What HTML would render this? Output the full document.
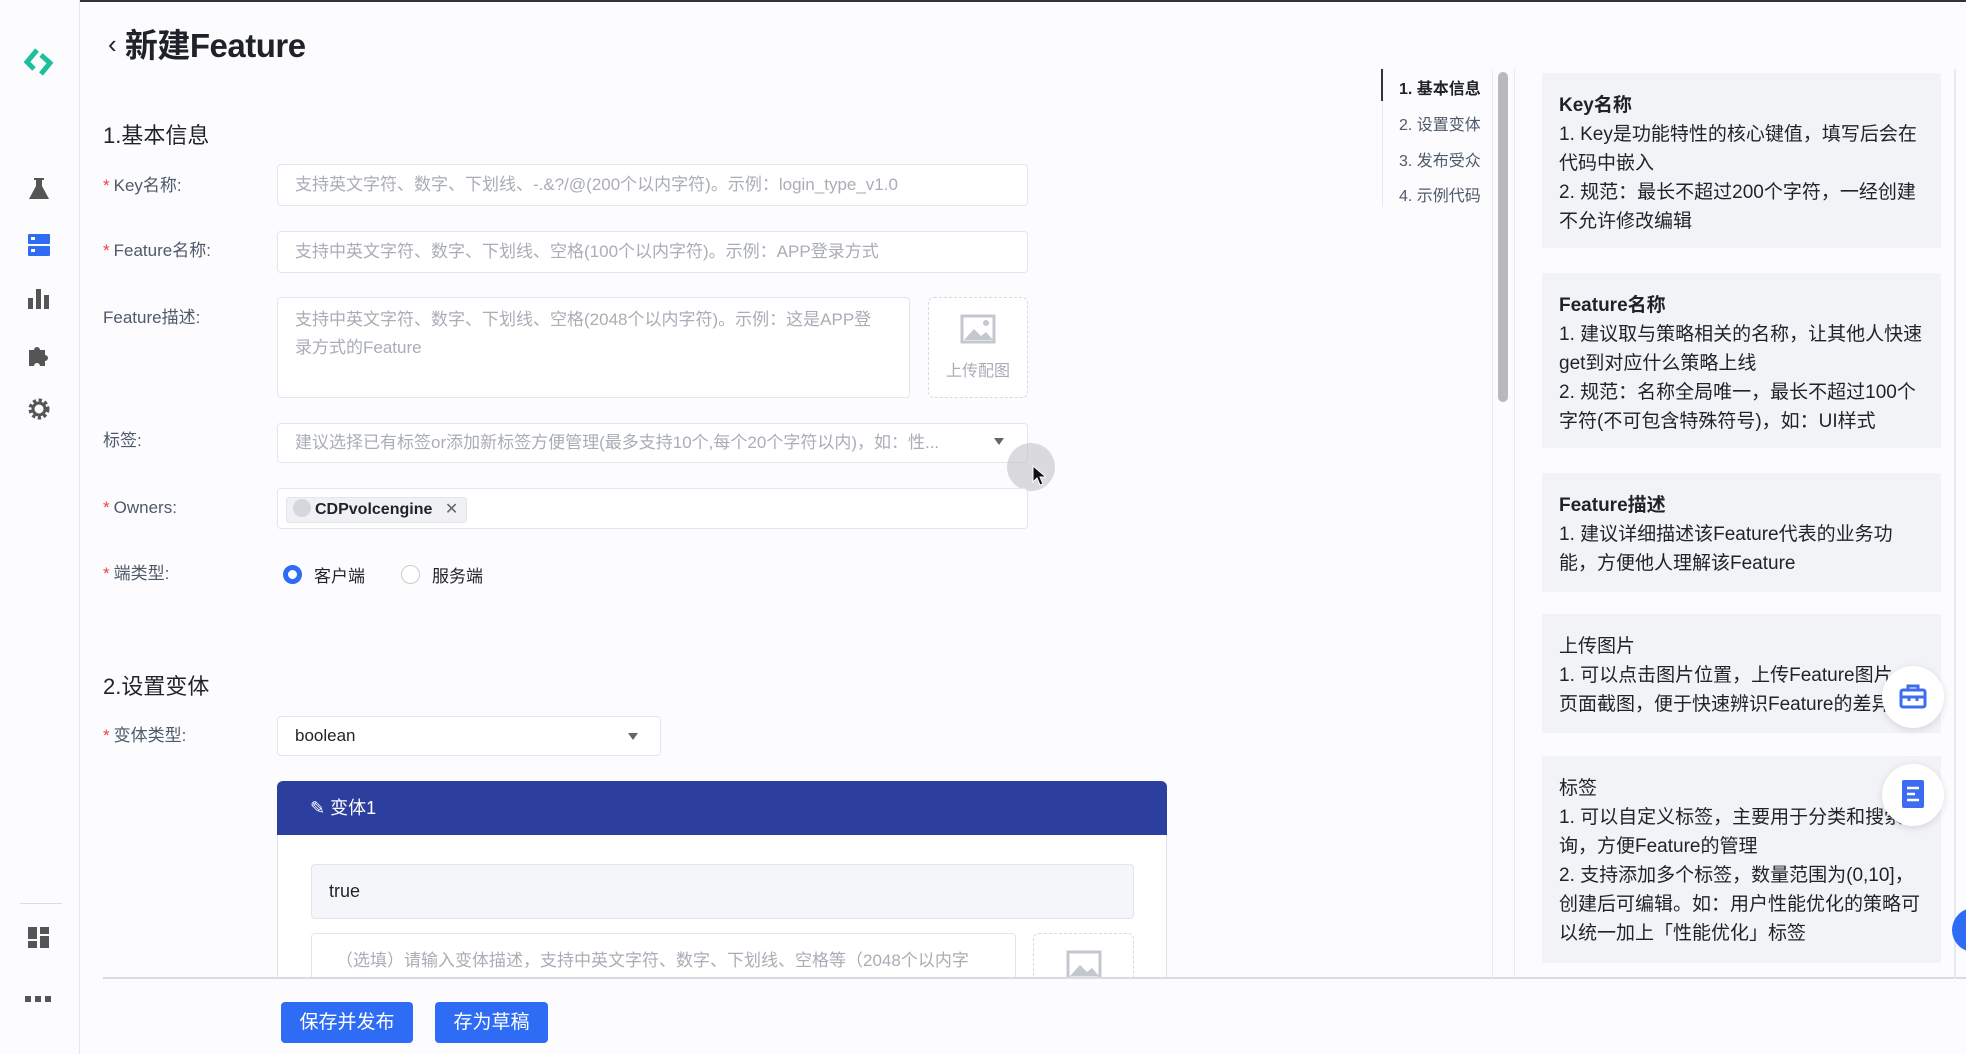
<!DOCTYPE html>
<html><head><meta charset="utf-8"><style>
*{box-sizing:border-box;margin:0;padding:0}
body{width:1966px;height:1054px;overflow:hidden;background:#fcfcfe;font-family:"Liberation Sans","Noto Sans CJK SC",sans-serif;position:relative;color:#1f2329}
.a{position:absolute}
.side{left:0;top:0;width:80px;height:1054px;border-right:1px solid #e6e8ec;background:#fcfcfe}
.lbl{font-size:17px;color:#4e5969;left:103px;line-height:22px}
.lbl b{color:#f53f3f;font-weight:normal;margin-right:4px}
.inp{left:277px;width:751px;height:42px;border:1px solid #e3e6ee;border-radius:4px;background:#fff;font-size:17px;color:#a9adb6;padding:0 17px;line-height:40px;white-space:nowrap;overflow:hidden}
.card{left:1542px;width:399px;background:#f2f3f7;padding:20px 14px 20px 17px;font-size:19px;line-height:29px;color:#1f2329}
.nav{left:1399px;font-size:16px;color:#4e5969}
.fb{width:62px;height:62px;border-radius:50%;background:#fff;box-shadow:0 2px 8px rgba(0,0,0,.12)}
</style></head><body>
<div class="a" style="left:0;top:0;width:1966px;height:2px;background:#333"></div>
<div class="a side"></div>
<svg class="a" style="left:22px;top:46px" width="34" height="32" viewBox="0 0 34 32"><path d="M15 4 L5 16 L12 23" stroke="#1ec09b" stroke-width="5" fill="none"/><path d="M19 9 L28 17 L19 28" stroke="#1ec09b" stroke-width="5" fill="none"/></svg>
<svg class="a" style="left:27px;top:177px" width="24" height="24"><path d="M7 1h10v2h-2v6l7 13H2L9 9V3H7z" fill="#555"/></svg>
<svg class="a" style="left:27px;top:233px" width="24" height="24"><rect x="1" y="1" width="22" height="10" rx="1" fill="#2f6cf6"/><rect x="1" y="13" width="22" height="10" rx="1" fill="#2f6cf6"/><rect x="4" y="4" width="4" height="3" fill="#fff"/><rect x="4" y="16" width="4" height="3" fill="#fff"/></svg>
<svg class="a" style="left:27px;top:288px" width="24" height="22"><rect x="1" y="10" width="5" height="11" fill="#555"/><rect x="9" y="1" width="5" height="20" fill="#555"/><rect x="17" y="7" width="5" height="14" fill="#555"/></svg>
<svg class="a" style="left:27px;top:343px" width="24" height="24"><path d="M2 7h5a3 3 0 1 1 6 0h5v5a3 3 0 1 1 0 6v5H13a3 3 0 1 0-6 0H2z" fill="#555"/></svg>
<svg class="a" style="left:27px;top:397px" width="24" height="24" viewBox="0 0 24 24"><circle cx="12" cy="12" r="8" fill="none" stroke="#555" stroke-width="5" stroke-dasharray="3 2.3"/><circle cx="12" cy="12" r="6" fill="none" stroke="#555" stroke-width="3"/></svg>
<div class="a" style="left:20px;top:903px;width:42px;height:1px;background:#ddd"></div>
<svg class="a" style="left:27px;top:926px" width="24" height="24"><rect x="1" y="1" width="9" height="12" fill="#555"/><rect x="13" y="1" width="9" height="7" fill="#555"/><rect x="1" y="15" width="9" height="7" fill="#555"/><rect x="13" y="10" width="9" height="12" fill="#555"/></svg>
<svg class="a" style="left:25px;top:995px" width="28" height="8"><rect x="0" y="1" width="6" height="6" fill="#555"/><rect x="10" y="1" width="6" height="6" fill="#555"/><rect x="20" y="1" width="6" height="6" fill="#555"/></svg>

<div class="a" style="left:108px;top:26px;font-size:33px;line-height:40px;color:#1f2329;font-weight:bold;letter-spacing:-0.5px"><span style="font-size:26px;position:relative;top:-4px;font-weight:normal">‹</span> 新建Feature</div>
<div class="a" style="left:103px;top:122px;font-size:22px;line-height:28px">1.基本信息</div>

<div class="a lbl" style="top:175px"><b>*</b>Key名称:</div>
<div class="a inp" style="top:164px">支持英文字符、数字、下划线、-.&amp;?/@(200个以内字符)。示例：login_type_v1.0</div>
<div class="a lbl" style="top:240px"><b>*</b>Feature名称:</div>
<div class="a inp" style="top:231px">支持中英文字符、数字、下划线、空格(100个以内字符)。示例：APP登录方式</div>
<div class="a lbl" style="top:307px">Feature描述:</div>
<div class="a inp" style="top:297px;width:633px;height:101px;white-space:normal;line-height:28px;padding:8px 30px 0 17px">支持中英文字符、数字、下划线、空格(2048个以内字符)。示例：这是APP登录方式的Feature</div>
<div class="a" style="left:928px;top:297px;width:100px;height:101px;border:1px dashed #d6d9e0;border-radius:6px;background:#fff;text-align:center;color:#a9adb6;font-size:16px">
<svg style="margin-top:16px" width="36" height="30"><rect x="2" y="2" width="32" height="26" fill="none" stroke="#c4c7ce" stroke-width="3"/><path d="M4 26l10-11 7 7 5-4 7 8z" fill="#c4c7ce"/><circle cx="26" cy="9" r="3" fill="#c4c7ce"/></svg><div style="margin-top:8px">上传配图</div></div>
<div class="a lbl" style="top:430px">标签:</div>
<div class="a inp" style="top:423px;height:40px;line-height:38px">建议选择已有标签or添加新标签方便管理(最多支持10个,每个20个字符以内)，如：性...</div>
<div class="a" style="left:994px;top:438px;border-left:5px solid transparent;border-right:5px solid transparent;border-top:7px solid #666"></div>
<div class="a" style="left:1007px;top:443px;width:48px;height:48px;border-radius:50%;background:rgba(190,190,195,.55)"></div>
<svg class="a" style="left:1032px;top:465px" width="14" height="22"><path d="M1 1v16l4-4 3 7 3-1-3-7h6z" fill="#111" stroke="#fff" stroke-width="1"/></svg>
<div class="a lbl" style="top:497px"><b>*</b>Owners:</div>
<div class="a inp" style="top:488px;height:41px;padding:0 8px"><span style="display:inline-block;margin-top:7px;height:26px;background:#f0f1f4;border:1px solid #e3e5ea;border-radius:3px;padding:0 8px 0 6px;line-height:24px;color:#1f2329;font-size:16px;font-weight:bold"><span style="display:inline-block;width:18px;height:18px;border-radius:50%;background:#d5d7dc;vertical-align:-3px;margin-right:4px"></span>CDPvolcengine <span style="color:#666;margin-left:8px;font-weight:normal">✕</span></span></div>
<div class="a lbl" style="top:563px"><b>*</b>端类型:</div>
<div class="a" style="left:283px;top:565px;width:19px;height:19px;border-radius:50%;border:5px solid #2f6cf6;background:#fff"></div>
<div class="a" style="left:314px;top:562px;font-size:17px">客户端</div>
<div class="a" style="left:401px;top:565px;width:19px;height:19px;border-radius:50%;border:1px solid #ccc;background:#fff"></div>
<div class="a" style="left:432px;top:562px;font-size:17px">服务端</div>

<div class="a" style="left:103px;top:673px;font-size:22px;line-height:28px">2.设置变体</div>
<div class="a lbl" style="top:725px"><b>*</b>变体类型:</div>
<div class="a inp" style="top:716px;width:384px;height:40px;line-height:38px;color:#1f2329">boolean</div>
<div class="a" style="left:628px;top:733px;border-left:5px solid transparent;border-right:5px solid transparent;border-top:7px solid #666"></div>
<div class="a" style="left:277px;top:781px;width:890px;height:220px;border:1px solid #dfe2ea;border-radius:6px 6px 0 0;background:#fff"></div>
<div class="a" style="left:277px;top:781px;width:890px;height:54px;background:#2d3f9e;border-radius:6px 6px 0 0;color:#fff;font-size:18px;line-height:54px;padding-left:33px">✎ 变体1</div>
<div class="a" style="left:311px;top:864px;width:823px;height:55px;border:1px solid #e2e5ee;border-radius:4px;background:#f5f6fa;font-size:18px;line-height:53px;padding-left:17px">true</div>
<div class="a" style="left:311px;top:933px;width:705px;height:60px;border:1px solid #e2e5ee;border-radius:4px;background:#fff;font-size:17px;color:#a9adb6;padding:12px 0 0 24px;white-space:nowrap;overflow:hidden">（选填）请输入变体描述，支持中英文字符、数字、下划线、空格等（2048个以内字</div>
<div class="a" style="left:1033px;top:933px;width:101px;height:60px;border:1px dashed #d6d9e0;border-radius:6px;background:#fff"><svg style="margin:16px 0 0 32px" width="36" height="30"><rect x="2" y="2" width="32" height="26" fill="none" stroke="#c4c7ce" stroke-width="3"/><path d="M4 26l10-11 7 7 5-4 7 8z" fill="#c4c7ce"/></svg></div>
<div class="a" style="left:81px;top:977px;width:1885px;height:77px;background:#fcfcfe"></div>
<div class="a" style="left:103px;top:977px;width:1863px;height:2px;background:#d8dbe3"></div>
<div class="a" style="left:281px;top:1002px;width:132px;height:41px;background:#2f6cf6;border-radius:4px;color:#fff;font-size:19px;line-height:41px;text-align:center">保存并发布</div>
<div class="a" style="left:435px;top:1002px;width:113px;height:41px;background:#2f6cf6;border-radius:4px;color:#fff;font-size:19px;line-height:41px;text-align:center">存为草稿</div>

<div class="a" style="left:1382px;top:69px;width:1px;height:138px;background:#e6e8ec"></div>
<div class="a" style="left:1381px;top:69px;width:2px;height:32px;background:#333"></div>
<div class="a nav" style="top:75px;font-weight:bold;color:#1f2329">1. 基本信息</div>
<div class="a nav" style="top:111px">2. 设置变体</div>
<div class="a nav" style="top:147px">3. 发布受众</div>
<div class="a nav" style="top:182px">4. 示例代码</div>
<div class="a" style="left:1492px;top:69px;width:1px;height:910px;background:#e8eaee"></div>
<div class="a" style="left:1514px;top:69px;width:1px;height:910px;background:#e8eaee"></div>
<div class="a" style="left:1498px;top:72px;width:10px;height:330px;border-radius:5px;background:#b8b9bd"></div>

<div class="a card" style="top:73px;height:175px;padding-top:18px"><b style="font-weight:bold">Key名称</b><br>1. Key是功能特性的核心键值，填写后会在代码中嵌入<br>2. 规范：最长不超过200个字符，一经创建不允许修改编辑</div>
<div class="a card" style="top:273px;height:175px;padding-top:18px"><b>Feature名称</b><br>1. 建议取与策略相关的名称，让其他人快速get到对应什么策略上线<br>2. 规范：名称全局唯一，最长不超过100个字符(不可包含特殊符号)，如：UI样式</div>
<div class="a card" style="top:473px;height:119px;padding-top:18px"><b>Feature描述</b><br>1. 建议详细描述该Feature代表的业务功能，方便他人理解该Feature</div>
<div class="a card" style="top:614px;height:119px;white-space:nowrap;overflow:hidden;padding-top:18px">上传图片<br>1. 可以点击图片位置，上传Feature图片<br>页面截图，便于快速辨识Feature的差异</div>
<div class="a card" style="top:756px;height:207px;padding-top:18px">标签<br>1. 可以自定义标签，主要用于分类和搜索查询，方便Feature的管理<br>2. 支持添加多个标签，数量范围为(0,10]，创建后可编辑。如：用户性能优化的策略可以统一加上「性能优化」标签</div>
<div class="a" style="left:1954px;top:69px;width:2px;height:910px;background:#e8eaee"></div>

<div class="a fb" style="left:1882px;top:666px"><svg style="margin:17px 0 0 17px" width="28" height="26"><rect x="2" y="7" width="24" height="17" rx="2" fill="none" stroke="#3d6cf0" stroke-width="3"/><path d="M9 7V3h10v4M2 14h24M10 14v4M18 14v4" stroke="#3d6cf0" stroke-width="3" fill="none"/></svg></div>
<div class="a fb" style="left:1882px;top:764px"><svg style="margin:16px 0 0 20px" width="22" height="28"><rect x="0" y="0" width="22" height="28" rx="2" fill="#3d6cf0"/><path d="M5 8h12M5 14h8M5 20h12" stroke="#fff" stroke-width="2.5"/></svg></div>
<div class="a" style="left:1952px;top:908px;width:44px;height:44px;border-radius:50%;background:#2f6cf6"></div>
</body></html>
